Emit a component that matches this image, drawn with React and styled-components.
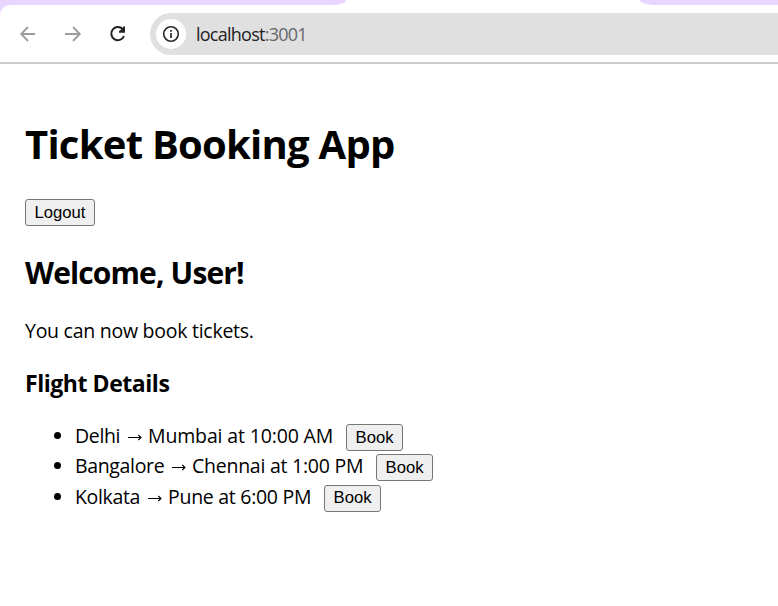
import React from "react";
import styled, { createGlobalStyle } from "styled-components";

const GlobalStyle = createGlobalStyle`
  * { box-sizing: border-box; }
  body {
    margin: 0;
    background: #fff;
    color: #000;
    font-family: "Segoe UI", "Open Sans", "Noto Sans", sans-serif;
    overflow: hidden;
  }
`;

const Window = styled.div`
  width: 100%;
  height: 606px;
  background: #fff;
`;

const TabStrip = styled.div`
  display: flex;
  justify-content: space-between;
  height: 5px;
  background: #fff;
`;

const TabGap = styled.div`
  width: ${(p) => p.$width}px;
  height: 5px;
  background: #e9d5ff;
  border-radius: ${(p) => (p.$side === "left" ? "0 0 14px 0 / 0 0 5px 0" : "0 0 0 14px / 0 0 0 5px")};
`;

const ToolbarBack = styled.div`
  background: linear-gradient(to right, #e9d5ff 12px, #fff 12px);
`;

const Toolbar = styled.div`
  display: flex;
  align-items: center;
  height: 59px;
  padding: 1px 0 0 16px;
  background: #fff;
  border-bottom: 2px solid #cbcbcb;
  border-top-left-radius: 10px;
`;

const NavIcon = styled.svg`
  flex: none;
  width: 24px;
  height: 24px;
  margin: 0 21px 1px 0;
  fill: none;
  stroke: ${(p) => p.$color};
  stroke-width: ${(p) => p.$weight};
`;

const AddressBar = styled.div`
  display: flex;
  align-items: center;
  flex: 1;
  height: 42px;
  margin-left: -1px;
  padding-left: 6px;
  background: #e0e0e0;
  border-radius: 21px 0 0 21px;
`;

const InfoBadge = styled.span`
  display: flex;
  align-items: center;
  justify-content: center;
  width: 30px;
  height: 30px;
  border-radius: 50%;
  background: #fff;
`;

const Address = styled.span`
  margin-left: 10px;
  font-size: 18px;
  line-height: 24px;
  letter-spacing: -0.75px;
  color: #1f2023;
`;

const Port = styled.span`
  color: #66686b;
`;

const Page = styled.main`
  padding: 53px 25px 0;
`;

const Title = styled.h1`
  margin: 0 0 28px;
  font-size: 40px;
  line-height: 54px;
  letter-spacing: -0.75px;
`;

const Welcome = styled.h2`
  margin: 27px 0 24px;
  font-size: 30px;
  line-height: 40px;
  letter-spacing: -0.87px;
`;

const Message = styled.p`
  margin: 0 0 24px;
  font-size: 19.5px;
  line-height: 27px;
  letter-spacing: -0.26px;
`;

const Subheading = styled.h3`
  margin: 0 0 22px;
  font-size: 23px;
  line-height: 31px;
  letter-spacing: -0.45px;
`;

const Button = styled.button`
  display: block;
  flex: none;
  width: ${(p) => p.$width}px;
  height: 27px;
  padding: 0;
  border: 1px solid #767676;
  border-radius: 3px;
  background: #efefef;
  color: #000;
  font: 16.67px/24px "Liberation Sans", Arial, sans-serif;
`;

const FlightList = styled.ul`
  margin: 0;
  padding: 0 0 0 29px;
  list-style: none;
`;

const Flight = styled.li`
  display: flex;
  align-items: flex-start;
  height: 30.4px;
  padding-top: 3px;
  font-size: 19.5px;
  line-height: 23px;
  letter-spacing: -0.25px;
  white-space: pre;
`;

const Bullet = styled.span`
  width: 7px;
  height: 7px;
  margin: 8px 14px 0 0;
  border-radius: 50%;
  background: #000;
`;

const Place = styled.span`
  width: ${(p) => p.$width}px;
  letter-spacing: ${(p) => p.$tracking}px;
`;

const Arrow = styled.svg`
  flex: none;
  width: 15px;
  height: 9px;
  margin: 9px 6px 0;
  fill: none;
  stroke: #000;
  stroke-width: 1.1;
`;

const flights = [
  { from: "Delhi", fromWidth: 46, rest: "Mumbai at 10:00 AM", restWidth: 198, tracking: -0.15 },
  { from: "Bangalore", fromWidth: 90, rest: "Chennai at 1:00 PM", restWidth: 184, tracking: -0.25 },
  { from: "Kolkata", fromWidth: 66, rest: "Pune at 6:00 PM", restWidth: 156, tracking: -0.28 },
];

export default function App() {
  return (
    <Window>
      <GlobalStyle />
      <TabStrip>
        <TabGap $width={346} $side="left" />
        <TabGap $width={138} $side="right" />
      </TabStrip>
      <ToolbarBack>
        <Toolbar>
          <NavIcon viewBox="0 0 24 24" $color="#9c9c9c" $weight={1.8}>
            <path d="M19 12H6M12 5L5.2 12L12 19" />
          </NavIcon>
          <NavIcon viewBox="0 0 24 24" $color="#9c9c9c" $weight={1.8}>
            <path d="M4 12H18M12 5L18.8 12L12 19" />
          </NavIcon>
          <NavIcon viewBox="0 0 24 24" $color="#202124" $weight={2}>
            <path d="M17.2 7.7A6.6 6.6 0 1 0 18 14.1" />
            <path d="M18 4.5V9.8H13M17.5 6.5L14.5 9.5" />
          </NavIcon>
          <AddressBar>
            <InfoBadge>
              <svg width="18" height="18" viewBox="0 0 18 18" fill="none" stroke="#28292c">
                <circle cx="9" cy="9" r="7.3" strokeWidth="1.6" />
                <path d="M9 8V13M9 5V6.7" strokeWidth="1.7" />
              </svg>
            </InfoBadge>
            <Address>
              localhost<Port>:3001</Port>
            </Address>
          </AddressBar>
        </Toolbar>
      </ToolbarBack>
      <Page>
        <Title>Ticket Booking App</Title>
        <Button $width={70}>Logout</Button>
        <Welcome>Welcome, User!</Welcome>
        <Message>You can now book tickets.</Message>
        <Subheading>Flight Details</Subheading>
        <FlightList>
          {flights.map((f) => (
            <Flight key={f.from}>
              <Bullet />
              <Place $width={f.fromWidth} $tracking={-0.35}>{f.from}</Place>
              <Arrow viewBox="0 0 15 9">
                <path d="M1 4.5H14M11.3 2L14 4.5L11.3 7" />
              </Arrow>
              <Place $width={f.restWidth} $tracking={f.tracking}>{f.rest}</Place>
              <Button $width={57}>Book</Button>
            </Flight>
          ))}
        </FlightList>
      </Page>
    </Window>
  );
}
